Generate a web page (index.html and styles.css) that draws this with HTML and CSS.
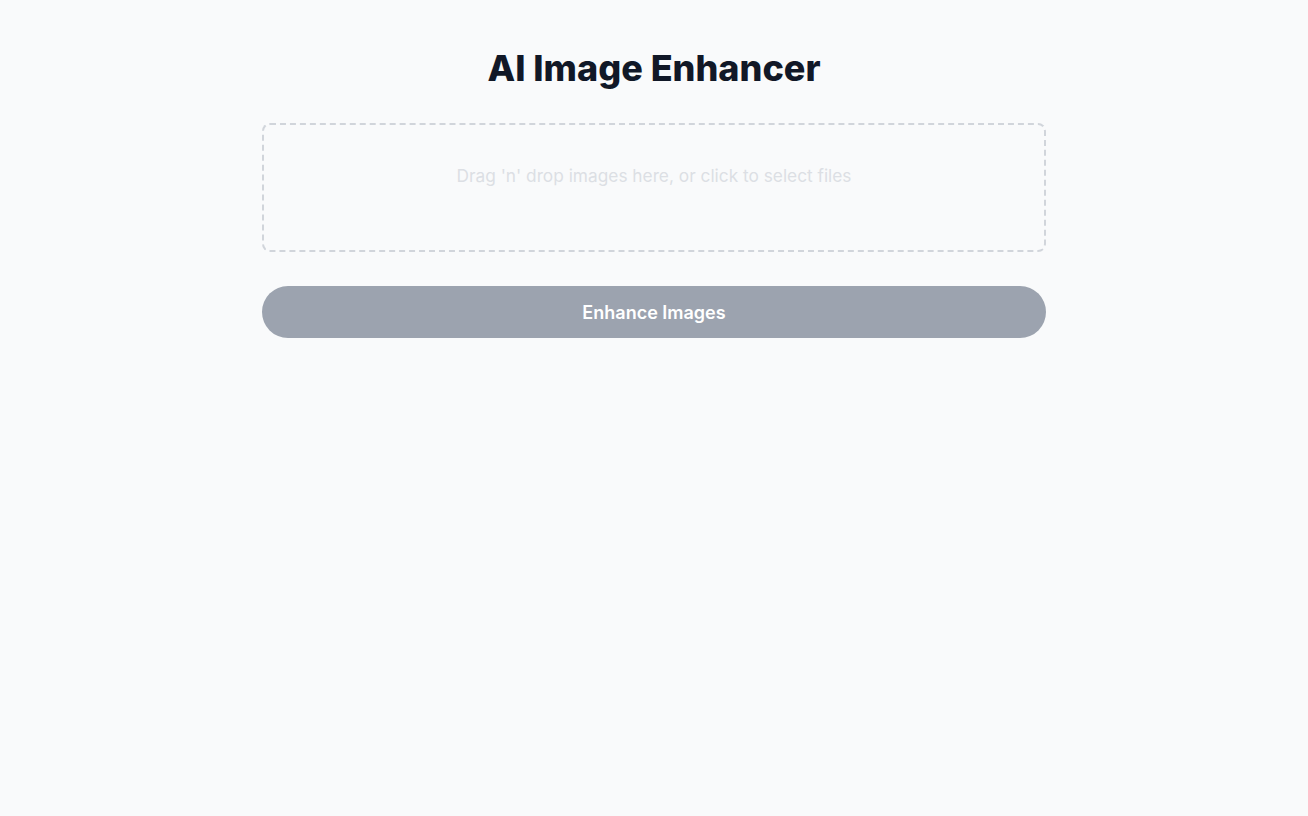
FILE: index.html
```html
<!DOCTYPE html>
<html lang="en">
<head>
<meta charset="utf-8">
<title>AI Image Enhancer</title>
<link rel="stylesheet" href="styles.css">
</head>
<body>
  <main class="app">
    <h1 class="title">AI Image Enhancer</h1>
    <div class="dropzone">
      <p class="dropzone-text">Drag 'n' drop images here, or click to select files</p>
    </div>
    <button class="enhance-btn" disabled>Enhance Images</button>
  </main>
</body>
</html>
```

FILE: styles.css
```css
html, body {
  margin: 0;
  padding: 0;
  background: #f9fafb;
  min-height: 100%;
}
body {
  font-family: Inter, "Noto Sans", sans-serif;
  color: #111827;
}
.app {
  width: 784px;
  margin: 0 auto;
  padding-top: 48px;
  display: flex;
  flex-direction: column;
}
.title {
  margin: 0 0 35px;
  font-size: 36px;
  line-height: 40px;
  font-weight: 800;
  text-align: center;
  color: #111827;
}
.dropzone {
  border: 2px dashed #d1d5db;
  border-radius: 8px;
  padding: 37px 20px 60px;
  text-align: center;
  cursor: pointer;
}
.dropzone-text {
  margin: 0;
  font-size: 17.3px;
  line-height: 28px;
  color: #dcdfe4;
}
.enhance-btn {
  margin-top: 34px;
  height: 52px;
  border: none;
  border-radius: 26px;
  background: #9ca3af;
  color: #ffffff;
  font-family: Inter, "Noto Sans", sans-serif;
  font-size: 18px;
  font-weight: 600;
  cursor: not-allowed;
}
```
